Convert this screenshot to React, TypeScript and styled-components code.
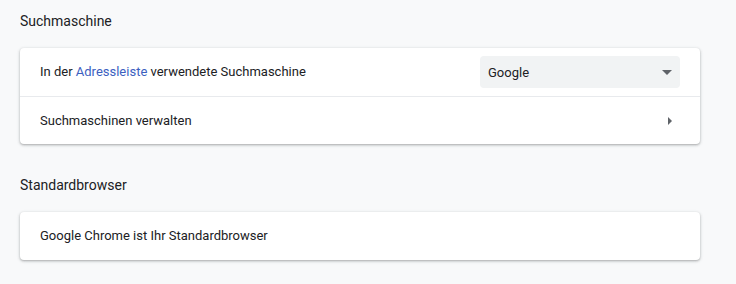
import styled, { createGlobalStyle } from "styled-components";

const GlobalStyle = createGlobalStyle`
  html, body {
    margin: 0;
    padding: 0;
    background: #f8f9fa;
  }
  body {
    font-family: Roboto, "Liberation Sans", Arial, sans-serif;
    color: #202124;
    -webkit-font-smoothing: antialiased;
  }
`;

export default function App() {
  return (
    <>
      <GlobalStyle />
      <Page>
        <Section>
          <SectionTitle>Suchmaschine</SectionTitle>
          <Card>
            <Row>
              <RowLabel>
                In der <Link href="#">Adressleiste</Link> verwendete Suchmaschine
              </RowLabel>
              <Select>
                <span>Google</span>
                <DropArrow />
              </Select>
            </Row>
            <Row $divider $clickable>
              <RowLabel>Suchmaschinen verwalten</RowLabel>
              <SubArrow />
            </Row>
          </Card>
        </Section>
        <Section>
          <SectionTitle>Standardbrowser</SectionTitle>
          <Card>
            <Row>
              <RowLabel>Google Chrome ist Ihr Standardbrowser</RowLabel>
            </Row>
          </Card>
        </Section>
      </Page>
    </>
  );
}

const Page = styled.div`
  width: 680px;
  padding: 11px 20px 24px;
  display: flex;
  flex-direction: column;
  gap: 31px;
`;

const Section = styled.section`
  display: flex;
  flex-direction: column;
`;

const SectionTitle = styled.h2`
  margin: 0 0 17px;
  font-size: 14px;
  font-weight: 400;
  line-height: 20px;
  color: #202124;
`;

const Card = styled.div`
  background: #fff;
  border-radius: 4px;
  box-shadow: 0 1px 2px 0 rgba(60, 64, 67, 0.3),
    0 1px 3px 1px rgba(60, 64, 67, 0.12);
`;

const Row = styled.div<{ $divider?: boolean; $clickable?: boolean }>`
  display: flex;
  align-items: center;
  justify-content: space-between;
  min-height: 48px;
  padding: 0 20px;
  box-sizing: border-box;
  border-top: ${({ $divider }) => ($divider ? "1px solid #e8eaed" : "none")};
  cursor: ${({ $clickable }) => ($clickable ? "pointer" : "default")};
`;

const RowLabel = styled.div`
  font-size: 13px;
  line-height: 20px;
  color: #202124;
`;

const Link = styled.a`
  color: #3c5fbf;
  text-decoration: none;
`;

const Select = styled.div`
  width: 200px;
  height: 32px;
  box-sizing: border-box;
  display: flex;
  align-items: center;
  justify-content: space-between;
  padding: 0 8px 0 8px;
  background: #f1f3f4;
  border-radius: 4px;
  font-size: 13px;
  color: #202124;
`;

const DropArrow = styled.span`
  width: 0;
  height: 0;
  margin-right: 0;
  border-left: 5px solid transparent;
  border-right: 5px solid transparent;
  border-top: 5px solid #5f6368;
`;

const SubArrow = styled.span`
  width: 0;
  height: 0;
  margin-right: 8px;
  border-top: 4px solid transparent;
  border-bottom: 4px solid transparent;
  border-left: 4px solid #5f6368;
`;
